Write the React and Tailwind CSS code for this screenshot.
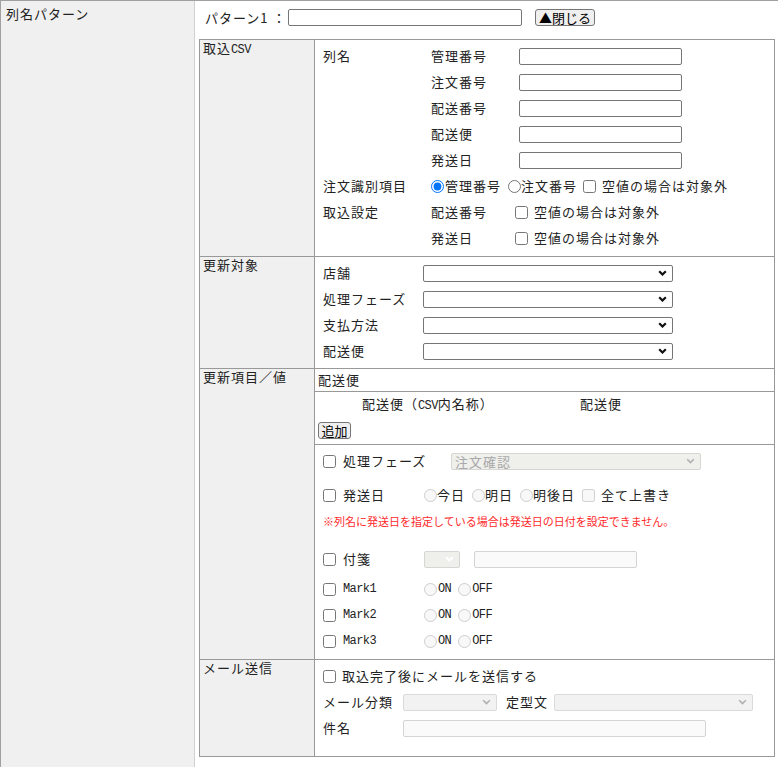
import React from 'react';

const sans = "font-['Noto_Sans_CJK_JP','Noto_Sans',sans-serif]";
const mono = "font-['Liberation_Mono','Noto_Sans_CJK_JP',monospace] text-[12px] tracking-[-0.6px]";

function Check({ disabled }) {
    return <input type="checkbox" disabled={disabled} className="m-0 h-[13px] w-[13px] shrink-0" />;
}

function Radio({ name, checked, disabled }) {
    return <input type="radio" name={name} defaultChecked={checked} disabled={disabled} className="m-0 h-[13px] w-[13px] shrink-0" />;
}

function Field({ className = '', disabled }) {
    const tone = disabled ? 'border-[#d4d4d4] bg-[#fafafa]' : 'border-[#767676] bg-white';
    return <input type="text" disabled={disabled} className={'h-[17px] shrink-0 rounded-[2px] border px-[2px] outline-none ' + tone + ' ' + className} />;
}

function Chevron({ color = '#111', bold = true }) {
    return (
        <svg width="9" height="6" viewBox="0 0 9 6" className="shrink-0">
            <path d="M1.2 1.2 L4.5 4.5 L7.8 1.2" fill="none" stroke={color} strokeWidth={bold ? 2.2 : 1.6} />
        </svg>
    );
}

// select look-alike: box + chevron on the right
function Dropdown({ className = '', text = '', disabled, chevron }) {
    const tone = disabled
        ? 'border-[#d6d6d2] bg-[#efefec] text-[#a8a8a8]'
        : 'border-[#767676] bg-white';
    return (
        <div className={'flex h-[17px] shrink-0 items-center justify-between rounded-[2px] border pl-[3px] pr-[5px] leading-[15px] ' + tone + ' ' + className}>
            <span>{text}</span>
            {chevron || <Chevron color={disabled ? '#b0b0b0' : '#111'} bold={!disabled} />}
        </div>
    );
}

function Btn({ children, className = '' }) {
    return (
        <button type="button" className={'flex h-[17px] items-center justify-center rounded-[3px] border border-[#767676] bg-[#efefef] leading-[15px] text-black ' + className}>
            {children}
        </button>
    );
}

function Section({ label, first, children }) {
    return (
        <div className={'flex ' + (first ? '' : 'border-t border-[#999]')}>
            <div className="w-[115px] shrink-0 border-r border-[#999] bg-[#f0f0f0] pl-[3px] leading-[16px]">{label}</div>
            <div className="min-w-0 flex-1">{children}</div>
        </div>
    );
}

function Row({ children, className = '' }) {
    return <div className={'flex h-[26px] items-center ' + className}>{children}</div>;
}

export default function App() {
    return (
        <div className={'flex min-h-[767px] border-t border-l border-[#a0a0a0] bg-white text-[13px] tracking-[1px] text-[#222] ' + sans}>
            <div className="w-[194px] shrink-0 border-r border-[#d0d0d0] bg-[#f0f0f0] pl-[5px] pt-[5px] leading-[16px]">
                列名パターン
            </div>

            <div className="min-w-0 flex-1 pl-[4px] pr-[3px] pt-[8px] pb-[9px]">
                <div className="flex h-[17px] items-center">
                    <span className="w-[89px] shrink-0 pl-[6px]">パターン1 ：</span>
                    <Field className="w-[234px]" />
                    <Btn className="ml-[13px] w-[60px] tracking-normal">▲閉じる</Btn>
                </div>

                <div className="mt-[13px] border border-[#999]">
                    {/* 取込CSV */}
                    <Section first label={<>取込<span className={mono}>CSV</span></>}>
                        <div className="pl-[8px] pt-[3px] pb-[5px]">
                            {['管理番号', '注文番号', '配送番号', '配送便', '発送日'].map((name, i) => (
                                <Row key={name}>
                                    <span className="w-[108px] shrink-0">{i === 0 ? '列名' : ''}</span>
                                    <span className="w-[88px] shrink-0">{name}</span>
                                    <Field className="w-[163px]" />
                                </Row>
                            ))}
                            <Row>
                                <span className="w-[108px] shrink-0">注文識別項目</span>
                                <Radio name="key" checked />
                                <span className="ml-[1px]">管理番号</span>
                                <span className="ml-[7px] flex"><Radio name="key" /></span>
                                <span>注文番号</span>
                                <span className="ml-[6px] flex"><Check /></span>
                                <span className="ml-[6px]">空値の場合は対象外</span>
                            </Row>
                            {['配送番号', '発送日'].map((name, i) => (
                                <Row key={name}>
                                    <span className="w-[108px] shrink-0">{i === 0 ? '取込設定' : ''}</span>
                                    <span className="w-[84px] shrink-0">{name}</span>
                                    <Check />
                                    <span className="ml-[6px]">空値の場合は対象外</span>
                                </Row>
                            ))}
                        </div>
                    </Section>

                    {/* 更新対象 */}
                    <Section label="更新対象">
                        <div className="pl-[8px] pt-[3px] pb-[4px]">
                            {['店舗', '処理フェーズ', '支払方法', '配送便'].map((name) => (
                                <Row key={name}>
                                    <span className="w-[100px] shrink-0">{name}</span>
                                    <Dropdown className="w-[250px]" />
                                </Row>
                            ))}
                        </div>
                    </Section>

                    {/* 更新項目／値 */}
                    <Section label="更新項目／値">
                        <div className="flex h-[23px] items-center border-b border-[#999] pl-[3px]">配送便</div>
                        <div className="border-b border-[#999]">
                            <div className="flex h-[24px] items-center pl-[47px]">
                                <span className="w-[218px] shrink-0">配送便（<span className={mono}>CSV</span>内名称）</span>
                                <span>配送便</span>
                            </div>
                            <div className="pl-[3px] pt-[6px] pb-[5px]">
                                <Btn className="w-[33px] tracking-normal">追加</Btn>
                            </div>
                        </div>
                        <div className="pl-[8px] pt-[3px] pb-[5px]">
                            <Row>
                                <Check />
                                <span className="ml-[7px] w-[108px] shrink-0">処理フェーズ</span>
                                <Dropdown disabled className="w-[250px]" text="注文確認" />
                            </Row>
                            <Row className="mt-[8px]">
                                <Check />
                                <span className="ml-[7px] w-[81px] shrink-0">発送日</span>
                                <Radio name="ship" disabled />
                                <span>今日</span>
                                <span className="ml-[7px] flex"><Radio name="ship" disabled /></span>
                                <span>明日</span>
                                <span className="ml-[7px] flex"><Radio name="ship" disabled /></span>
                                <span>明後日</span>
                                <span className="ml-[7px] flex"><Check disabled /></span>
                                <span className="ml-[6px]">全て上書き</span>
                            </Row>
                            <Row>
                                <span className="text-[11px] tracking-normal text-[#ff2a2a]">
                                    ※列名に発送日を指定している場合は発送日の日付を設定できません。
                                </span>
                            </Row>
                            <Row className="mt-[12px]">
                                <Check />
                                <span className="ml-[7px] w-[81px] shrink-0">付箋</span>
                                <Dropdown disabled className="w-[36px] pr-[4px]" chevron={<Chevron color="#fff" />} />
                                <Field disabled className="ml-[14px] w-[163px]" />
                            </Row>
                            {['Mark1', 'Mark2', 'Mark3'].map((mark, i) => (
                                <Row key={mark} className={i === 0 ? 'mt-[4px]' : ''}>
                                    <Check />
                                    <span className={'ml-[7px] w-[81px] shrink-0 ' + mono}>{mark}</span>
                                    <Radio name={mark} disabled />
                                    <span className={'ml-[1px] ' + mono}>ON</span>
                                    <span className="ml-[7px] flex"><Radio name={mark} disabled /></span>
                                    <span className={'ml-[1px] ' + mono}>OFF</span>
                                </Row>
                            ))}
                        </div>
                    </Section>

                    {/* メール送信 */}
                    <Section label="メール送信">
                        <div className="pl-[8px] pt-[3px] pb-[15px]">
                            <Row>
                                <Check />
                                <span className="ml-[6px]">取込完了後にメールを送信する</span>
                            </Row>
                            <Row>
                                <span className="w-[80px] shrink-0">メール分類</span>
                                <Dropdown disabled className="w-[94px] border-[#dadada] bg-[#f2f2f2]" />
                                <span className="ml-[9px] w-[48px] shrink-0">定型文</span>
                                <Dropdown disabled className="w-[199px] border-[#dadada] bg-[#f2f2f2]" />
                            </Row>
                            <Row>
                                <span className="w-[80px] shrink-0">件名</span>
                                <Field disabled className="w-[303px]" />
                            </Row>
                        </div>
                    </Section>
                </div>
            </div>
        </div>
    );
}
